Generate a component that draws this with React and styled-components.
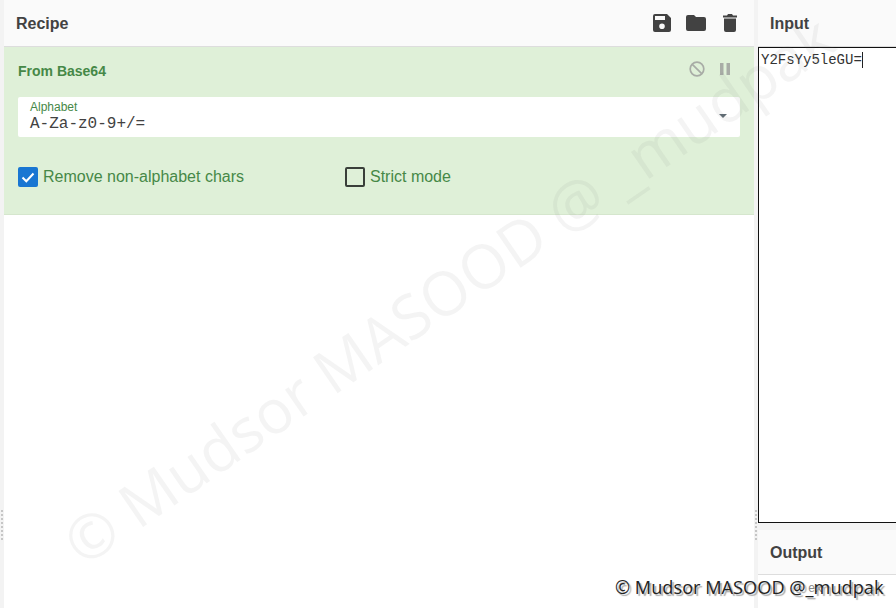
import styled, { createGlobalStyle } from 'styled-components';

const GlobalStyle = createGlobalStyle`
  html, body {
    margin: 0;
    height: 100%;
    overflow: hidden;
    background: #fff;
  }
  #root {
    height: 100%;
  }
`;

function SaveIcon() {
  return (
    <svg width="18" height="18" viewBox="0 0 18 18">
      <path
        fill="#424242"
        fillRule="evenodd"
        d="M2 0h12l4 4v12a2 2 0 0 1-2 2H2a2 2 0 0 1-2-2V2a2 2 0 0 1 2-2zM2 2v4h10V2zM9 9.500a2.800 2.800 0 1 0 0 5.600 2.800 2.800 0 0 0 0-5.600z"
      />
    </svg>
  );
}

function FolderIcon() {
  return (
    <svg width="20" height="16" viewBox="0 0 20 16">
      <path fill="#424242" d="M2 0h6l2 2h8a2 2 0 0 1 2 2v10a2 2 0 0 1-2 2H2a2 2 0 0 1-2-2V2a2 2 0 0 1 2-2z" />
    </svg>
  );
}

function TrashIcon() {
  return (
    <svg width="14" height="18" viewBox="0 0 14 18">
      <path fill="#424242" d="M1 4.500h12V16a2 2 0 0 1-2 2H3a2 2 0 0 1-2-2zM0 1.500h4L5 0h4l1 1.500h4v2H0z" />
    </svg>
  );
}

function DisableIcon() {
  return (
    <svg width="16" height="16" viewBox="0 0 16 16" fill="none" stroke="#a8aca6" strokeWidth="1.700">
      <circle cx="8" cy="8" r="6.800" />
      <path d="M3.300 3.300l9.400 9.400" />
    </svg>
  );
}

function PauseIcon() {
  return (
    <svg width="10" height="12" viewBox="0 0 10 12">
      <path fill="#a8aca6" d="M0 0h3.500v12H0zM6.500 0H10v12H6.500z" />
    </svg>
  );
}

function CheckMark() {
  return (
    <svg width="14" height="11" viewBox="0 0 14 11" fill="none" stroke="#fff" strokeWidth="2">
      <path d="M1.500 5.500l3.800 3.800 7.200-7.800" />
    </svg>
  );
}

export default function App() {
  return (
    <>
      <GlobalStyle />
      <Page>
        <Gutter>
          <Grip />
        </Gutter>
        <RecipePane>
          <Header>
            <Title>Recipe</Title>
            <HeaderIcons>
              <SaveIcon />
              <FolderIcon />
              <TrashIcon />
            </HeaderIcons>
          </Header>
          <Operation>
            <OpHeader>
              <OpTitle>From Base64</OpTitle>
              <OpIcons>
                <DisableIcon />
                <PauseIcon />
              </OpIcons>
            </OpHeader>
            <AlphabetField>
              <FieldLabel>Alphabet</FieldLabel>
              <FieldValue>A-Za-z0-9+/=</FieldValue>
              <Caret />
            </AlphabetField>
            <Options>
              <Option>
                <CheckBox $checked>
                  <CheckMark />
                </CheckBox>
                <OptionLabel>Remove non-alphabet chars</OptionLabel>
              </Option>
              <Option>
                <CheckBox />
                <OptionLabel>Strict mode</OptionLabel>
              </Option>
            </Options>
          </Operation>
        </RecipePane>
        <Gutter>
          <Grip />
        </Gutter>
        <IOColumn>
          <Header>
            <Title>Input</Title>
          </Header>
          <InputArea>
            <InputText>Y2FsYy5leGU=</InputText>
            <TextCursor />
          </InputArea>
          <SplitBar />
          <OutputHeader>
            <Title>Output</Title>
          </OutputHeader>
          <OutputMeta>
            <MetaText>ex</MetaText>
          </OutputMeta>
        </IOColumn>
        <Watermark>© Mudsor MASOOD @ _mudpak</Watermark>
        <Credit>© Mudsor MASOOD @_mudpak</Credit>
      </Page>
    </>
  );
}

const Page = styled.div`
  position: relative;
  display: flex;
  width: 896px;
  height: 608px;
  overflow: hidden;
  background: #fff;
  font-family: 'Liberation Sans', Arial, sans-serif;
`;

const Gutter = styled.div`
  flex: 0 0 4px;
  display: flex;
  align-items: flex-end;
  padding-bottom: 68px;
  background: #f3f3f3;
`;

const Grip = styled.div`
  width: 2px;
  height: 30px;
  margin-left: 1px;
  background: repeating-linear-gradient(to bottom, #c6c6c6 0 2px, transparent 2px 4px);
`;

const RecipePane = styled.section`
  flex: 0 0 750px;
  display: flex;
  flex-direction: column;
`;

const Header = styled.header`
  box-sizing: border-box;
  flex: 0 0 47px;
  display: flex;
  align-items: center;
  justify-content: space-between;
  padding: 0 17px 0 12px;
  background: #fafafa;
  border-bottom: 1px solid #dddddd;
`;

const Title = styled.h2`
  margin: 2px 0 0;
  font-size: 16px;
  font-weight: 700;
  color: #424242;
`;

const HeaderIcons = styled.div`
  display: flex;
  align-items: center;
  gap: 16px;

  svg:nth-child(2) {
    margin: 0 1px 0 -1px;
  }
`;

const Operation = styled.div`
  box-sizing: border-box;
  height: 168px;
  padding: 0 14px;
  background: #dff0d8;
  border-bottom: 1px solid #d5e6cd;
  color: #468847;
`;

const OpHeader = styled.div`
  display: flex;
  align-items: center;
  justify-content: space-between;
  height: 48px;
  padding-right: 10px;
`;

const OpTitle = styled.h3`
  margin: 0;
  font-size: 14px;
  font-weight: 700;
  color: #468847;
`;

const OpIcons = styled.div`
  display: flex;
  align-items: center;
  gap: 15px;
  margin-top: -4px;
`;

const AlphabetField = styled.div`
  box-sizing: border-box;
  position: relative;
  height: 40px;
  margin-top: 2px;
  padding: 4px 12px 0;
  background: #fff;
  border-radius: 2px;
`;

const FieldLabel = styled.div`
  font-size: 12px;
  line-height: 13px;
  color: #468847;
`;

const FieldValue = styled.div`
  font-family: 'Liberation Mono', 'Courier New', monospace;
  font-size: 16px;
  line-height: 21px;
  color: #424242;
`;

const Caret = styled.span`
  position: absolute;
  top: 17px;
  right: 13px;
  border-left: 4px solid transparent;
  border-right: 4px solid transparent;
  border-top: 4px solid #5f6b73;
`;

const Options = styled.div`
  display: flex;
  margin-top: 30px;
`;

const Option = styled.label`
  flex: 0 0 327px;
  display: flex;
  align-items: center;
  gap: 5px;
`;

const CheckBox = styled.span`
  box-sizing: border-box;
  width: 20px;
  height: 20px;
  display: flex;
  align-items: center;
  justify-content: center;
  border-radius: 2px;
  background: ${(p) => (p.$checked ? '#1976d2' : 'transparent')};
  border: ${(p) => (p.$checked ? 'none' : '2px solid #3a3f3a')};
`;

const OptionLabel = styled.span`
  font-size: 16px;
  color: #468847;
`;

const IOColumn = styled.section`
  flex: 1;
  min-width: 0;
  display: flex;
  flex-direction: column;
`;

const InputArea = styled.div`
  box-sizing: border-box;
  flex: 0 0 476px;
  display: flex;
  align-items: flex-start;
  padding: 4px 2px;
  background: #fff;
  border: 1px solid #111;
  border-right: none;
`;

const InputText = styled.span`
  font-family: 'Liberation Mono', 'Courier New', monospace;
  font-size: 14px;
  line-height: 16px;
  color: #333;
`;

const TextCursor = styled.span`
  width: 1px;
  height: 16px;
  background: #222;
`;

const SplitBar = styled.div`
  flex: 0 0 7px;
  background: #f3f3f3;
`;

const OutputHeader = styled(Header)`
  flex: 0 0 45px;
`;

const OutputMeta = styled.div`
  flex: 1;
  padding: 3px 0 0 50px;
`;

const MetaText = styled.span`
  font-family: 'Liberation Mono', 'Courier New', monospace;
  font-size: 12px;
  color: #888;
`;

const Watermark = styled.div`
  position: absolute;
  left: 93px;
  top: 502px;
  font-family: 'Open Sans', sans-serif;
  font-size: 61px;
  line-height: 80px;
  white-space: nowrap;
  color: rgba(120, 120, 120, 0.08);
  transform: rotate(-34.500deg);
  transform-origin: 0 100%;
  pointer-events: none;
`;

const Credit = styled.div`
  position: absolute;
  left: 615px;
  top: 575px;
  font-family: 'Open Sans', sans-serif;
  font-size: 18.200px;
  line-height: 24px;
  white-space: nowrap;
  color: #222;
  text-shadow: 2px 2px 1px #a8a8a8;
`;
